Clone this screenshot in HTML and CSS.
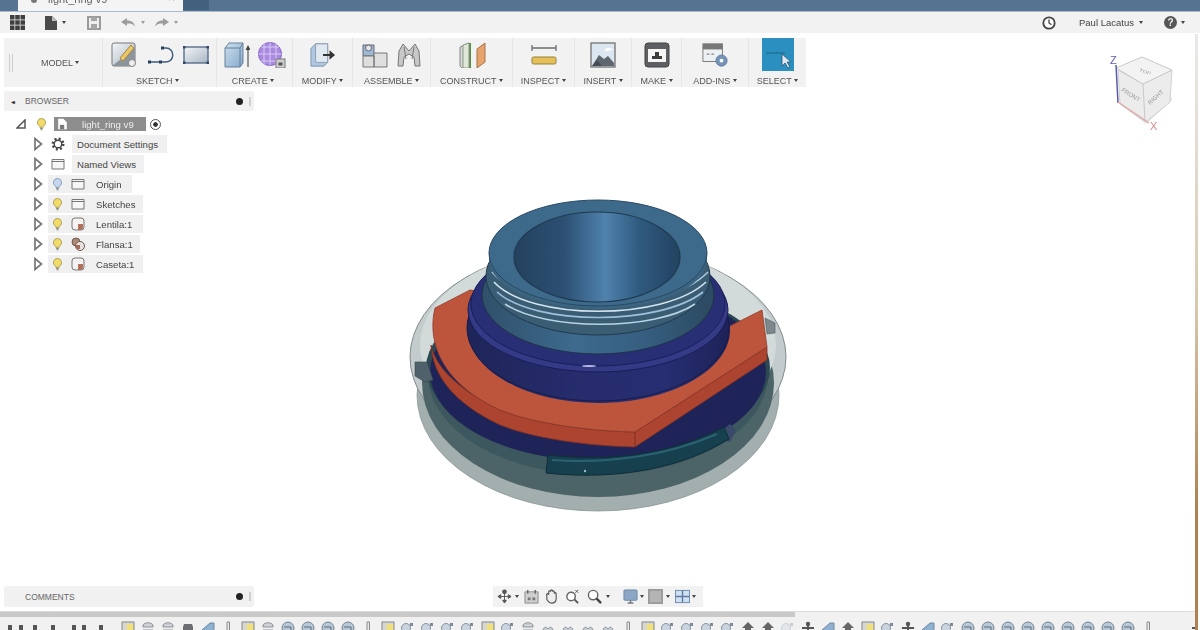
FILE: index.html
```html
<!DOCTYPE html>
<html lang="en">
<head>
<meta charset="utf-8">
<title>light_ring v9</title>
<link rel="stylesheet" href="styles.css">
</head>
<body>
<svg class="defs" aria-hidden="true">
  <defs>
    <linearGradient id="hole" x1="0" x2="1" y1="0" y2="0">
      <stop offset="0" stop-color="#24425f"/><stop offset=".3" stop-color="#2c4f72"/><stop offset=".55" stop-color="#4f82ad"/><stop offset=".75" stop-color="#2f5b80"/><stop offset="1" stop-color="#234260"/>
    </linearGradient>
    <linearGradient id="indigo" x1="0" x2="1" y1="0" y2="0">
      <stop offset="0" stop-color="#1e2558"/><stop offset=".4" stop-color="#262c6c"/><stop offset=".75" stop-color="#272e72"/><stop offset="1" stop-color="#1d2358"/>
    </linearGradient>
    <linearGradient id="steel" x1="0" x2="1" y1="0" y2="0">
      <stop offset="0" stop-color="#30506a"/><stop offset=".4" stop-color="#3d6a8e"/><stop offset=".7" stop-color="#365e80"/><stop offset="1" stop-color="#2c4a60"/>
    </linearGradient>
    <linearGradient id="sheet" x1="0" x2="1" y1="0" y2="1">
      <stop offset="0" stop-color="#f4f6f8"/><stop offset="1" stop-color="#a9b4c2"/>
    </linearGradient>
    <linearGradient id="blue-box" x1="0" x2="1" y1="0" y2="1">
      <stop offset="0" stop-color="#cfe0ee"/><stop offset="1" stop-color="#83a9cb"/>
    </linearGradient>
    <symbol id="bulb" viewBox="0 0 12 14">
      <path d="M6 1a4.400 4.400 0 0 0-2.600 8c.6.5.8 1 .8 1.600h3.600c0-.6.2-1.100.8-1.600A4.400 4.400 0 0 0 6 1z" fill="#f1dc6a" stroke="#a89a55"/>
      <path d="M4.400 12h3.200M5 13.400h2" stroke="#7d7d70"/>
    </symbol>
    <symbol id="bulb-off" viewBox="0 0 12 14">
      <path d="M6 1a4.400 4.400 0 0 0-2.600 8c.6.5.8 1 .8 1.600h3.600c0-.6.2-1.100.8-1.600A4.400 4.400 0 0 0 6 1z" fill="#c5d8ee" stroke="#7d97ba"/>
      <path d="M4.400 12h3.200M5 13.400h2" stroke="#7d7d80"/>
    </symbol>
    <symbol id="twisty" viewBox="0 0 10 14">
      <path d="M2 1.500v11L8.500 7z" fill="#fff" stroke="#777" stroke-width="1.700"/>
    </symbol>
    <symbol id="folder" viewBox="0 0 14 12">
      <path d="M1 1.500h12v9.500H1zM1 3.500h12" fill="#f6f6f6" stroke="#777"/>
    </symbol>
    <symbol id="comp" viewBox="0 0 14 14">
      <rect x="1" y="1" width="12" height="12" rx="3" fill="#f6f4f2" stroke="#777"/>
      <path d="M7 7h5v3a3 3 0 0 1-3 3H7z" fill="#b0705c"/>
    </symbol>
    <symbol id="comp2" viewBox="0 0 14 14">
      <circle cx="5" cy="5" r="4" fill="#b28675" stroke="#6d5a55"/>
      <circle cx="9" cy="9" r="4.500" fill="#e9e3e0" stroke="#6d5a55"/>
      <path d="M5 8h4v4H5z" fill="#a56a58"/>
    </symbol>
    <symbol id="tl-y" viewBox="0 0 14 14"><rect x="1" y="1" width="12" height="12" fill="#d6d6d2" stroke="#888"/><path d="M6 3h6v8H6z" fill="#f1df7a"/></symbol>
    <symbol id="tl-s" viewBox="0 0 14 14"><path d="M2 4c2-3 8-3 10 0v2H2zM2 9h10v3H2z" fill="#cfd3d8" stroke="#8d9298"/></symbol>
    <symbol id="tl-d" viewBox="0 0 14 14"><path d="M3 3h8l1 3v6H2V6z" fill="#6b6f73"/></symbol>
    <symbol id="tl-b" viewBox="0 0 14 14"><path d="M1 9l8-7h4v10H1z" fill="#8fb0cf" stroke="#6f88a3"/></symbol>
    <symbol id="tl-p" viewBox="0 0 14 14"><path d="M6 1h2.500v12H6z" fill="#e8e8e8" stroke="#8a8a8a"/></symbol>
    <symbol id="tl-r" viewBox="0 0 14 14"><circle cx="7" cy="7" r="6" fill="#b7c7d8" stroke="#75838f"/><path d="M3 6h7v5" fill="none" stroke="#5f6c78"/></symbol>
    <symbol id="tl-q" viewBox="0 0 14 14"><circle cx="5" cy="7" r="4.500" fill="#c9d4e0" stroke="#87929e"/><path d="M9 2h3v3H9z" fill="#7b8b9b"/></symbol>
    <symbol id="tl-m" viewBox="0 0 14 14"><path d="M2 9c1-3 3-4 5-1 2-3 4-2 5 1v4H2z" fill="#c6cdd5" stroke="#8a949f"/></symbol>
    <symbol id="tl-u" viewBox="0 0 14 14"><path d="M7 1l6 6h-3v6H4V7H1z" fill="#666"/></symbol>
    <symbol id="tl-a" viewBox="0 0 14 14"><circle cx="7" cy="3" r="2.200" fill="#555"/><path d="M7 3v10M1 7h12" stroke="#555" stroke-width="2"/></symbol>
  </defs>
</svg>

<div class="app">
  <header class="tabs">
    <div class="tab">
      <svg class="tab-doc" viewBox="0 0 8 8"><circle cx="4" cy="4" r="3" fill="#777"/></svg>
      <span class="tab-title">light_ring v9</span>
      <span class="tab-close">×</span>
    </div>
    <div class="tab-new"></div>
  </header>

  <div class="qat">
    <svg class="qat-grid" viewBox="0 0 15 15"><path d="M0 0h4.500v4.500H0zM5.200 0h4.600v4.500H5.200zM10.500 0H15v4.500h-4.500zM0 5.200h4.500v4.600H0zM5.200 5.200h4.600v4.600H5.200zM10.500 5.200H15v4.600h-4.500zM0 10.500h4.500V15H0zM5.200 10.500h4.600V15H5.200zM10.500 10.500H15V15h-4.500z" fill="#3f3f3f"/></svg>
    <svg class="qat-file" viewBox="0 0 12 14"><path d="M0 0h7l5 5v9H0z" fill="#4a4a4a"/><path d="M7 0v5h5" fill="#bbb"/></svg>
    <span class="caret qat-c1"></span>
    <svg class="qat-save" viewBox="0 0 14 14"><path d="M1 1h12v12H1z" fill="#eee" stroke="#9a9a9a" stroke-width="2"/><path d="M4 1h6v4H4zM4 8h6v5H4z" fill="#a5a5a5"/></svg>
    <svg class="qat-undo" viewBox="0 0 14 10"><path d="M0 4l6-4v2.500c4 0 7 1.500 8 6-2-2.500-4-3-8-3V8z" fill="#9c9c9c"/></svg>
    <span class="caret caret-faded qat-c2"></span>
    <svg class="qat-redo" viewBox="0 0 14 10"><path d="M14 4L8 0v2.500c-4 0-7 1.500-8 6 2-2.500 4-3 8-3V8z" fill="#9c9c9c"/></svg>
    <span class="caret caret-faded qat-c3"></span>
    <svg class="qat-clock" viewBox="0 0 14 14"><circle cx="7" cy="7" r="5.700" fill="#fff" stroke="#444" stroke-width="1.800"/><path d="M7 3.500V7l2.500 1.800" fill="none" stroke="#444" stroke-width="1.300"/></svg>
    <span class="qat-user">Paul Lacatus</span>
    <span class="caret qat-c4"></span>
    <span class="qat-help">?</span>
    <span class="caret qat-c5"></span>
  </div>

  <main class="workspace">
    <svg class="viewcube" viewBox="1100 48 75 85">
      <path d="M1122 106l24 18 26-24-2-6-24 24z" fill="#e4e4e4"/>
      <path d="M1118 70l2 34 26 18 24-20 2-32-29 14z" fill="#ececec" stroke="#cfcfcf"/>
      <path d="M1116 68l26-11 30 13-29 14z" fill="#f3f3f3" stroke="#c8c8c8"/>
      <path d="M1143 84l2 37" stroke="#c8c8c8"/>
      <path d="M1116 65l2 38" stroke="#5a5aa8" stroke-width="1.500"/>
      <path d="M1118 102l31 21" stroke="#e3a9a9" stroke-width="1.500"/>
      <text class="vc-axis vc-z" x="1110" y="64">Z</text>
      <text class="vc-axis vc-x" x="1150" y="130">X</text>
      <text class="vc-label" transform="translate(1139 71) rotate(20) scale(1 .7)">TOP</text>
      <text class="vc-label" transform="translate(1121 91) rotate(32)">FRONT</text>
      <text class="vc-label" transform="translate(1150 105) rotate(-42)">RIGHT</text>
    </svg>

    <svg class="model" viewBox="400 190 400 330">
      <!-- translucent outer shell -->
      <ellipse cx="598" cy="395" rx="181" ry="116" fill="#a3aeae" stroke="#8a9596" stroke-width=".8"/>
      <ellipse cx="598" cy="357" rx="188" ry="112" fill="#c3cbcc" stroke="#7f8a8b"/>
      <ellipse cx="598" cy="383" rx="176" ry="114" fill="#4c6367"/>
      <ellipse cx="598" cy="375" rx="170" ry="100" fill="#3c585e"/>
      <ellipse cx="598" cy="345" rx="178" ry="100" fill="#d3dada"/>
      <ellipse cx="598" cy="368" rx="172" ry="84" fill="#2c4851"/>
      <!-- navy base plate -->
      <ellipse cx="598" cy="372" rx="168" ry="89" fill="#1f2458"/>
      <path d="M415 362h12l6 18-8 2-10-6z" fill="#4f626b" stroke="#39474f" stroke-width=".6"/>
      <path d="M765 318l10 5v10l-8 1z" fill="#7d888c" stroke="#4f5a5f" stroke-width=".6"/>
      <path d="M720 432l10-8 6 6-6 12-7-2z" fill="#394a6a"/>
      <!-- teal arc piece -->
      <path d="M548 455c70 8 130-4 176-28l5 12c-45 28-110 42-183 34z" fill="#17404f" stroke="#0f2d39"/>
      <path d="M552 460c55 4 115-4 165-26" fill="none" stroke="#2b6272" stroke-width="2"/>
      <circle cx="585" cy="471" r="1.200" fill="#8fbcc4"/>
      <!-- red part -->
      <path d="M431 345C433 375 452 402 500 425C535 439 590 446 635 447L767 360V347L635 432C590 431 535 424 500 410C455 388 435 365 431 345z" fill="#ad4430" stroke="#7a2e22" stroke-width=".8"/>
      <path d="M435 308C426 345 445 385 500 410C535 424 590 431 635 432L767 347L762 310L728 327L470 290z" fill="#bd543c" stroke="#8e3b2b" stroke-width=".8"/>
      <path d="M635 432v15" stroke="#7a2e22"/>
      <!-- indigo body -->
      <path d="M468 322v8c0 40 58 73 130 73s132-33 132-73v-8z" fill="url(#indigo)"/>
      <ellipse cx="598" cy="328" rx="131" ry="73" fill="url(#indigo)" stroke="#181c4a"/>
      <ellipse cx="598" cy="310" rx="130" ry="62" fill="#343a86" stroke="#1a1e58"/>
      <ellipse cx="598" cy="304" rx="127" ry="62" fill="#282f74" stroke="#1a1e58"/>
      <ellipse cx="589" cy="366" rx="7" ry="1" fill="#b7b9e0"/>
      <!-- steel neck and threads -->
      <ellipse cx="598" cy="295" rx="116" ry="59" fill="url(#steel)" stroke="#1e3348"/>
      <ellipse cx="598" cy="276" rx="112" ry="59" fill="#3a5d74" stroke="#22394c"/>
      <g fill="none" stroke-width="1.600">
        <path d="M505 304C545 331 655 331 695 304" stroke="#b9d3e6"/>
        <path d="M497 292C535 326 660 326 703 292" stroke="#9fc0da"/>
        <path d="M494 282C530 321 665 321 706 282" stroke="#d2e4f1"/>
        <path d="M492 272C530 316 665 316 708 272" stroke="#a9c8de"/>
      </g>
      <!-- top collar -->
      <path d="M489 253v6c0 28 49 50 109 50s109-22 109-50v-6z" fill="#3b6480"/>
      <ellipse cx="598" cy="253" rx="109" ry="53" fill="#3d6a8a" stroke="#294a63"/>
      <ellipse cx="597" cy="257" rx="83" ry="45" fill="url(#hole)" stroke="#1f3a50" stroke-width="1.200"/>
    </svg>

    <nav class="toolbar">
      <section class="group g-model">
        <span class="grip"></span>
        <span class="model-label">MODEL <span class="tri"></span></span>
      </section>
      <section class="group g-sketch">
        <div class="icons">
          <svg class="ic" viewBox="0 0 26 26"><rect x="1" y="1" width="23" height="23" rx="2" fill="url(#sheet)" stroke="#777"/><path d="M1 24L24 6v16l-2 2z" fill="#8c949c"/><path d="M9 16L20 3l3 3-11 13z" fill="#e9c86a" stroke="#a7853a"/><circle cx="21" cy="21" r="3.500" fill="#eee" stroke="#888"/></svg>
          <svg class="ic ic-line" viewBox="0 0 28 22"><path d="M2 18h17c9 0 9-14 0-14h-5" fill="none" stroke="#3e5a7c" stroke-width="1.400"/><g fill="#27405f"><rect x="1" y="16.500" width="3" height="3"/><rect x="12" y="16.500" width="3" height="3"/><rect x="14" y="2.500" width="3" height="3"/></g></svg>
          <svg class="ic ic-rect" viewBox="0 0 26 18"><rect x="1" y="1" width="24" height="16" fill="url(#sheet)" stroke="#4d6684" stroke-width="1.300"/><g fill="#2e4664"><rect y="0" width="2.500" height="2.500"/><rect x="23.500" y="0" width="2.500" height="2.500"/><rect y="15.500" width="2.500" height="2.500"/><rect x="23.500" y="15.500" width="2.500" height="2.500"/></g></svg>
        </div>
        <span class="label l-sketch">SKETCH <span class="tri"></span></span>
      </section>
      <section class="group g-create">
        <div class="icons">
          <svg class="ic" viewBox="0 0 26 26"><path d="M1 6l4-5h14v20l-3 4H1z" fill="url(#blue-box)" stroke="#66809c"/><path d="M1 6h15v19M16 6l3-5" fill="none" stroke="#66809c"/><path d="M24 25V7" stroke="#555" stroke-width="1.200"/><path d="M24 3l2.500 5h-5z" fill="#444"/></svg>
          <svg class="ic ic-wide" viewBox="0 0 28 26"><circle cx="12" cy="12" r="11.500" fill="#a98ae0" stroke="#8569c2"/><path d="M.5 12h23M12 .5v23M3 5h18M3 19h18M6 1.500v21M18 1.500v21" stroke="#d9cbf5" fill="none"/><rect x="18" y="17" width="9" height="9" fill="#cfcfcf" stroke="#777"/><rect x="20.500" y="20.500" width="4" height="3" fill="#555"/></svg>
        </div>
        <span class="label l-create">CREATE <span class="tri"></span></span>
      </section>
      <section class="group g-modify">
        <div class="icons">
          <svg class="ic" viewBox="0 0 28 26"><path d="M1 6l5-5h13v20l-4 4H1z" fill="#aec8e2" stroke="#7d92a8"/><path d="M6 1h13v20H6z" fill="#e0e8f0" stroke="#8d9db0"/><path d="M14 12h7V8l6 5-6 5v-4h-7z" fill="#333"/></svg>
        </div>
        <span class="label">MODIFY <span class="tri"></span></span>
      </section>
      <section class="group g-assemble">
        <div class="icons">
          <svg class="ic" viewBox="0 0 26 26"><path d="M1 3h11v11H1z" fill="#9db9d3" stroke="#667"/><path d="M1 14h11v11H1zM12 11h13v14H12z" fill="#dedede" stroke="#777"/><circle cx="6.500" cy="6" r="3" fill="#e6e6e6" stroke="#667"/></svg>
          <svg class="ic" viewBox="0 0 26 26"><path d="M2 24l1-15 4-7 6 7 6-7 4 7 1 15h-5l-1-9-5-3-5 3-1 9z" fill="#c8c8c8" stroke="#777"/><path d="M8 5l2 12M18 5l-2 12" stroke="#777" fill="none"/></svg>
        </div>
        <span class="label">ASSEMBLE <span class="tri"></span></span>
      </section>
      <section class="group g-construct">
        <div class="icons">
          <svg class="ic ic-wide" viewBox="0 0 28 26"><path d="M2 5l9-4v25H4l-2-2z" fill="#d5d5d5" stroke="#8b8b8b"/><path d="M11 1h2v25h-2z" fill="#5b8a44"/><path d="M5 3l6-2v25H5z" fill="#dfe8d8" stroke="#8a9a82"/><path d="M19 7l8-6v19l-8 6z" fill="#e6a36c" stroke="#a5734a"/></svg>
        </div>
        <span class="label">CONSTRUCT <span class="tri"></span></span>
      </section>
      <section class="group g-inspect">
        <div class="icons">
          <svg class="ic" viewBox="0 0 26 22"><path d="M1 4h24M1 1v6M25 1v6" stroke="#6d6d6d" stroke-width="1.300" fill="none"/><rect x="1" y="13" width="24" height="7" rx="1.500" fill="#e5bf5a" stroke="#96813c"/></svg>
        </div>
        <span class="label">INSPECT <span class="tri"></span></span>
      </section>
      <section class="group g-insert">
        <div class="icons">
          <svg class="ic" viewBox="0 0 26 26"><rect x="1" y="1" width="24" height="24" fill="#dbe6f0" stroke="#7a7a7a" stroke-width="1.400"/><path d="M2 24l7-11 5 4 4-3 6 7v3z" fill="#5e6670"/><path d="M2 24l5-6 5 6z" fill="#474c54"/><path d="M15 7c3-2 7-1 8 1l-8 1z" fill="#fff"/></svg>
        </div>
        <span class="label">INSERT <span class="tri"></span></span>
      </section>
      <section class="group g-make">
        <div class="icons">
          <svg class="ic" viewBox="0 0 26 26"><rect x="1" y="1" width="24" height="24" rx="3" fill="#5d5f63" stroke="#444"/><rect x="4" y="7" width="18" height="13" fill="#f5f5f5"/><path d="M8 17h10v-3h-3v-4h-4v4H8z" fill="#3d3d3d"/></svg>
        </div>
        <span class="label">MAKE <span class="tri"></span></span>
      </section>
      <section class="group g-addins">
        <div class="icons">
          <svg class="ic" viewBox="0 0 28 26"><rect x="1" y="1" width="21" height="19" fill="#eef1f4" stroke="#777"/><path d="M1 1h21v6H1z" fill="#777"/><path d="M5 12h3M10 12h3" stroke="#888" stroke-width="1.400"/><circle cx="21" cy="19" r="6" fill="#7694b8" stroke="#5e7a9b"/><circle cx="21" cy="19" r="2" fill="#fff"/></svg>
        </div>
        <span class="label">ADD-INS <span class="tri"></span></span>
      </section>
      <section class="group g-select">
        <div class="select-box">
          <svg class="ic-select" viewBox="0 0 32 33"><rect width="32" height="33" fill="#2b8fc0"/><path d="M4 15h19" stroke="#1f7597" stroke-width="1.500"/><path d="M20 16l0 12 3-3 3 5 2-1-3-5h4z" fill="#dfe7ee" stroke="#1d4a66" stroke-width=".7"/></svg>
        </div>
        <span class="label l-select">SELECT <span class="tri"></span></span>
      </section>
    </nav>

    <section class="panel browser">
      <span class="dbl-arrow">◂◂</span>
      <span class="panel-title">BROWSER</span>
      <span class="pin"></span>
      <span class="panel-grip"></span>
    </section>

    <ul class="tree">
      <li class="row row-root">
        <svg class="root-tri" viewBox="0 0 10 10"><path d="M1 9L9 1v8z" fill="#fff" stroke="#555" stroke-width="1.500"/></svg>
        <svg class="bulb-root"><use href="#bulb"/></svg>
        <span class="root-chip">
          <svg class="root-doc" viewBox="0 0 12 14"><path d="M1 1h6l4 4v8H1z" fill="#fff"/><path d="M3 8h5v5H3z" fill="#7a7a7a"/></svg>
          <span class="root-name">light_ring v9</span>
        </span>
        <span class="root-radio"></span>
      </li>
      <li class="row">
        <svg class="twisty"><use href="#twisty"/></svg>
        <svg class="plain-ic" viewBox="0 0 14 14"><circle cx="7" cy="7" r="5.300" fill="none" stroke="#444" stroke-width="2.400" stroke-dasharray="2 2.160"/><circle cx="7" cy="7" r="3.800" fill="none" stroke="#444" stroke-width="1.400"/></svg>
        <span class="chip chip-plain w-doc">Document Settings</span>
      </li>
      <li class="row">
        <svg class="twisty"><use href="#twisty"/></svg>
        <svg class="plain-ic"><use href="#folder"/></svg>
        <span class="chip chip-plain w-views">Named Views</span>
      </li>
      <li class="row">
        <svg class="twisty"><use href="#twisty"/></svg>
        <span class="chip w-origin"><svg class="bulb"><use href="#bulb-off"/></svg><svg class="node-ic"><use href="#folder"/></svg><span class="node-name">Origin</span></span>
      </li>
      <li class="row">
        <svg class="twisty"><use href="#twisty"/></svg>
        <span class="chip w-full"><svg class="bulb"><use href="#bulb"/></svg><svg class="node-ic"><use href="#folder"/></svg><span class="node-name">Sketches</span></span>
      </li>
      <li class="row">
        <svg class="twisty"><use href="#twisty"/></svg>
        <span class="chip w-full"><svg class="bulb"><use href="#bulb"/></svg><svg class="node-ic"><use href="#comp"/></svg><span class="node-name">Lentila:1</span></span>
      </li>
      <li class="row">
        <svg class="twisty"><use href="#twisty"/></svg>
        <span class="chip w-flansa"><svg class="bulb"><use href="#bulb"/></svg><svg class="node-ic"><use href="#comp2"/></svg><span class="node-name">Flansa:1</span></span>
      </li>
      <li class="row">
        <svg class="twisty"><use href="#twisty"/></svg>
        <span class="chip w-full"><svg class="bulb"><use href="#bulb"/></svg><svg class="node-ic"><use href="#comp"/></svg><span class="node-name">Caseta:1</span></span>
      </li>
    </ul>

    <section class="panel comments">
      <span class="panel-title">COMMENTS</span>
      <span class="pin"></span>
      <span class="panel-grip"></span>
    </section>

    <div class="navbar">
      <svg class="nb nb-orbit" viewBox="0 0 16 16"><circle cx="8" cy="3" r="2.500" fill="#555"/><path d="M8 3v11M1 8h14M1 8l3-2v4zM15 8l-3-2v4zM8 15l-2-3h4z" stroke="#555" fill="#555"/></svg>
      <span class="caret nb-c1"></span>
      <svg class="nb nb-cal" viewBox="0 0 16 16"><path d="M1 3h14v12H1z" fill="#cfcfcf" stroke="#8b8b8b"/><path d="M4 1v4M12 1v4" stroke="#666" stroke-width="1.500"/><path d="M4 9h3v3H4zM9 9h3v3H9z" fill="#777"/></svg>
      <svg class="nb nb-hand" viewBox="0 0 16 16"><path d="M3 7c-1-2 1-3 2-1V3c0-1.500 2-1.500 2 0V2c0-1.500 2-1.500 2 0v1c0-1.500 2-1.500 2 0v2c0-1.500 2-1.500 2 0v5c0 3-2 5-5 5-3 0-4-2-5-4z" fill="#eee" stroke="#555" stroke-width="1.200"/></svg>
      <svg class="nb nb-zoom" viewBox="0 0 16 16"><circle cx="6.500" cy="8" r="4.500" fill="#fff" stroke="#666" stroke-width="1.500"/><path d="M10 11l4 4" stroke="#555" stroke-width="2"/><path d="M11 1l3 3M14 1l-3 3" stroke="#555"/></svg>
      <svg class="nb nb-mag" viewBox="0 0 16 16"><circle cx="6.500" cy="6.500" r="5" fill="#fff" stroke="#666" stroke-width="1.500"/><path d="M10 10l5 5" stroke="#444" stroke-width="2.500"/></svg>
      <span class="caret nb-c2"></span>
      <svg class="nb nb-display" viewBox="0 0 16 16"><rect x="1" y="1" width="14" height="11" rx="1" fill="#8ca7c6" stroke="#6c87a6"/><path d="M5 15h6M8 12v3" stroke="#777" stroke-width="1.500"/></svg>
      <span class="caret nb-c3"></span>
      <svg class="nb nb-square" viewBox="0 0 16 16"><rect width="16" height="16" fill="#9b9b9b"/><rect x="2" y="2" width="12" height="12" fill="#b4b4b4"/></svg>
      <span class="caret nb-c4"></span>
      <svg class="nb nb-grid" viewBox="0 0 16 16"><rect x=".5" y="1.500" width="15" height="13" fill="#cfe0f2" stroke="#6e8cb0"/><path d="M8 1.500v13M.5 8h15" stroke="#5d7ca3" stroke-width="1.500"/></svg>
      <span class="caret nb-c5"></span>
    </div>
  </main>

  <footer class="timeline">
    <div class="scrollbar"></div>
    <div class="tl-row">
      <div class="playback">
        <span class="pb pb1"></span><span class="pb pb2"></span><span class="pb pb3"></span><span class="pb pb4"></span><span class="pb pb5"></span><span class="pb pb6"></span><span class="pb pb7"></span>
      </div>
      <svg class="tl"><use href="#tl-y"/></svg><svg class="tl"><use href="#tl-s"/></svg><svg class="tl"><use href="#tl-s"/></svg><svg class="tl"><use href="#tl-d"/></svg><svg class="tl"><use href="#tl-b"/></svg><svg class="tl"><use href="#tl-p"/></svg>
      <svg class="tl"><use href="#tl-y"/></svg><svg class="tl"><use href="#tl-s"/></svg><svg class="tl"><use href="#tl-r"/></svg><svg class="tl"><use href="#tl-r"/></svg><svg class="tl"><use href="#tl-r"/></svg><svg class="tl"><use href="#tl-r"/></svg><svg class="tl"><use href="#tl-p"/></svg>
      <svg class="tl"><use href="#tl-y"/></svg><svg class="tl"><use href="#tl-q"/></svg><svg class="tl"><use href="#tl-q"/></svg><svg class="tl"><use href="#tl-q"/></svg><svg class="tl"><use href="#tl-q"/></svg><svg class="tl"><use href="#tl-y"/></svg><svg class="tl"><use href="#tl-q"/></svg><svg class="tl"><use href="#tl-s"/></svg>
      <svg class="tl"><use href="#tl-m"/></svg><svg class="tl"><use href="#tl-m"/></svg><svg class="tl"><use href="#tl-m"/></svg><svg class="tl"><use href="#tl-m"/></svg><svg class="tl"><use href="#tl-p"/></svg>
      <svg class="tl"><use href="#tl-y"/></svg><svg class="tl"><use href="#tl-q"/></svg><svg class="tl"><use href="#tl-q"/></svg><svg class="tl"><use href="#tl-q"/></svg><svg class="tl"><use href="#tl-q"/></svg><svg class="tl"><use href="#tl-u"/></svg><svg class="tl"><use href="#tl-u"/></svg><svg class="tl tl-faded"><use href="#tl-q"/></svg>
      <svg class="tl"><use href="#tl-a"/></svg><svg class="tl"><use href="#tl-b"/></svg><svg class="tl"><use href="#tl-u"/></svg><svg class="tl"><use href="#tl-y"/></svg><svg class="tl"><use href="#tl-q"/></svg><svg class="tl"><use href="#tl-a"/></svg><svg class="tl"><use href="#tl-b"/></svg><svg class="tl"><use href="#tl-q"/></svg>
      <svg class="tl"><use href="#tl-r"/></svg><svg class="tl"><use href="#tl-r"/></svg><svg class="tl"><use href="#tl-r"/></svg><svg class="tl"><use href="#tl-r"/></svg><svg class="tl"><use href="#tl-r"/></svg><svg class="tl"><use href="#tl-r"/></svg><svg class="tl"><use href="#tl-r"/></svg><svg class="tl"><use href="#tl-r"/></svg><svg class="tl"><use href="#tl-r"/></svg>
      <svg class="tl"><use href="#tl-p"/></svg>
      <svg class="tl tl-last"><use href="#tl-a"/></svg>
    </div>
  </footer>
  <div class="edge"></div>
</div>
</body>
</html>
```

FILE: styles.css
```css
* { box-sizing: border-box; }
html, body { margin: 0; padding: 0; background: #fff; }
body { width: 1200px; height: 630px; overflow: hidden; font-family: "Liberation Sans", Arial, sans-serif; color: #555; }
.defs { position: absolute; width: 0; height: 0; }
.app { position: relative; width: 1200px; height: 630px; display: flex; flex-direction: column; filter: blur(.7px); overflow: hidden; }
svg { display: block; flex: none; }

/* tab strip */
.tabs { flex: none; height: 12px; display: flex; padding-left: 18px; background: #567391; border-bottom: 1.500px solid #a9bccc; overflow: hidden; }
.tab { width: 165px; height: 12px; background: #f4f4f4; display: flex; align-items: flex-start; padding-left: 12px; position: relative; }
.tab-doc { width: 8px; height: 8px; margin-top: -4px; }
.tab-title { margin: -7px 0 0 10px; font-size: 11px; color: #666; line-height: 12px; }
.tab-close { margin: -8px 0 0 auto; padding-right: 8px; font-size: 12px; line-height: 12px; color: #777; }
.tab-new { width: 26px; height: 10px; background: #42617f; }

/* quick access */
.qat { flex: none; height: 21px; background: #f2f2f2; position: relative; display: flex; align-items: center; padding-left: 10px; }
.qat-grid { width: 15px; height: 15px; }
.qat-file { width: 12px; height: 14px; margin-left: 20px; }
.caret { width: 0; height: 0; flex: none; border-left: 2.500px solid transparent; border-right: 2.500px solid transparent; border-top: 3px solid #444; }
.caret-faded { border-top-color: #999; }
.qat-c1 { margin-left: 5px; }
.qat-save { width: 14px; height: 14px; margin-left: 21px; }
.qat-undo { width: 14px; height: 10px; margin-left: 20px; }
.qat-c2 { margin-left: 6px; }
.qat-redo { width: 14px; height: 10px; margin-left: 10px; }
.qat-c3 { margin-left: 5px; }
.qat-clock { width: 14px; height: 14px; margin-left: 864px; }
.qat-user { margin-left: 23px; font-size: 9.500px; color: #444; white-space: nowrap; }
.qat-c4 { margin-left: 5px; }
.qat-help { width: 13px; height: 13px; margin-left: 21px; border-radius: 50%; background: #555; color: #eee; font: bold 10px/13px "Liberation Sans", sans-serif; text-align: center; }
.qat-c5 { margin-left: 4px; }

/* workspace */
.workspace { flex: 1; position: relative; display: flex; flex-direction: column; align-items: flex-start; padding: 5px 0 4px 4px; min-height: 0; }
.viewcube { position: absolute; left: 1100px; top: 15px; width: 75px; height: 85px; }
.vc-axis { font: 11px "Liberation Sans", sans-serif; }
.vc-z { fill: #5f5fb8; }
.vc-x { fill: #d88a8a; }
.vc-label { font: 6px "Liberation Sans", sans-serif; fill: #999; }
.model { position: absolute; left: 400px; top: 157px; width: 400px; height: 330px; }

/* ribbon */
.toolbar { position: relative; width: 802px; height: 49px; display: flex; background: #f2f2f2; flex: none; }
.group { display: flex; flex-direction: column; align-items: center; height: 49px; border-right: 1px solid #e6e6e6; position: relative; }
.group:last-child { border-right: 0; }
.icons { height: 33px; display: flex; align-items: center; gap: 8px; padding-top: 1px; }
.ic { width: 26px; height: 26px; }
.ic-wide { width: 28px; }
.ic-line { width: 28px; height: 22px; margin-left: 2px; }
.ic-rect { height: 18px; }
.label { font-size: 9px; line-height: 10px; margin-top: 5px; white-space: nowrap; color: #555; }
.tri { display: inline-block; width: 0; height: 0; border-left: 2.500px solid transparent; border-right: 2.500px solid transparent; border-top: 3px solid #444; vertical-align: 2px; }
.g-model { width: 99px; flex-direction: row; }
.grip { width: 4px; height: 18px; margin-left: 5px; border-left: 1px solid #ccc; border-right: 1px solid #ccc; }
.model-label { font-size: 9px; margin-left: 28px; white-space: nowrap; color: #555; }
.g-sketch { width: 114px; }
.l-sketch { margin-right: 4px; }
.l-create { margin-right: 3px; }
.g-create { width: 76px; }
.g-modify { width: 60px; }
.g-assemble { width: 78px; }
.g-construct { width: 82px; }
.g-inspect { width: 62px; }
.g-insert { width: 57px; }
.g-make { width: 50px; }
.g-addins { width: 67px; }
.g-select { width: 57px; }
.select-box { height: 33px; }
.ic-select { width: 32px; height: 33px; }
.g-select .label { margin-top: 5px; }

/* panels */
.panel { position: relative; width: 250px; height: 21px; flex: none; display: flex; align-items: center; background: #f1f1f1; border-radius: 2px; font-size: 8.500px; color: #666; }
.browser { margin-top: 4px; padding-left: 7px; height: 20px; }
.comments { margin-top: auto; padding-left: 21px; }
.dbl-arrow { font-size: 6px; letter-spacing: -2px; color: #333; width: 14px; }
.panel-title { white-space: nowrap; }
.pin { width: 7px; height: 7px; margin-left: auto; border-radius: 50%; background: #222; }
.panel-grip { width: 2px; height: 9px; margin: 0 3px 0 6px; background: #cfcfcf; }

/* tree */
.tree { list-style: none; margin: 3px 0 0; padding: 0 0 0 29px; font-size: 9.600px; color: #444; }
.row { height: 20px; display: flex; align-items: center; }
.twisty { width: 10px; height: 14px; margin-right: 5px; }
.plain-ic { width: 14px; height: 14px; margin: 0 7px 0 3px; }
.chip { height: 18px; display: flex; align-items: center; background: #f0f0f0; white-space: nowrap; }
.chip-plain { padding-left: 5px; }
.bulb { width: 11px; height: 14px; margin-left: 4px; }
.node-ic { width: 14px; height: 14px; margin-left: 8px; }
.node-name { margin-left: 11px; }
.w-doc { width: 95px; }
.w-views { width: 72px; }
.w-origin { width: 84px; }
.w-full { width: 95px; }
.w-flansa { width: 92px; }
.row-root { margin-left: -17px; }
.root-tri { width: 10px; height: 10px; }
.bulb-root { width: 11px; height: 14px; margin-left: 10px; }
.root-chip { width: 92px; height: 14px; margin-left: 7px; background: #8d8d8d; display: flex; align-items: center; padding-left: 3px; }
.root-doc { width: 11px; height: 12px; }
.root-name { margin-left: 14px; color: #eee; white-space: nowrap; }
.root-radio { width: 11px; height: 11px; margin-left: 4px; border-radius: 50%; border: 1px solid #555; background: radial-gradient(circle, #333 0 2px, #fff 2.500px); }

/* navigation bar */
.navbar { position: absolute; left: 493px; top: 553px; width: 210px; height: 21px; display: flex; align-items: center; background: #f2f2f2; padding-left: 4px; }
.nb { width: 15px; height: 15px; }
.nb-c1 { margin: 0 0 0 3px; }
.nb-cal { margin-left: 5px; }
.nb-hand { margin-left: 5px; }
.nb-zoom { margin-left: 6px; }
.nb-mag { margin-left: 7px; }
.nb-c2 { margin-left: 4px; }
.nb-display { margin-left: 13px; }
.nb-c3 { margin-left: 2px; }
.nb-square { margin-left: 4px; }
.nb-c4 { margin-left: 3px; }
.nb-grid { margin-left: 5px; }
.nb-c5 { margin-left: 2px; }

/* timeline */
.timeline { flex: none; height: 19px; width: 1195px; background: #f1f1f1; overflow: hidden; border-top: 1px solid #dcdcdc; }
.scrollbar { width: 795px; height: 5px; background: #c9c9c9; }
.tl-row { display: flex; align-items: flex-start; padding-top: 4px; height: 20px; }
.playback { width: 118px; height: 20px; flex: none; position: relative; }
.pb { position: absolute; top: 4px; width: 4px; height: 5px; background: #555; }
.pb1 { left: 8px; }
.pb2 { left: 19px; }
.pb3 { left: 33px; }
.pb4 { left: 51px; }
.pb5 { left: 72px; }
.pb6 { left: 82px; }
.pb7 { left: 99px; }
.tl { width: 14px; height: 14px; margin: 0 3px; }
.tl-faded { opacity: .35; }
.tl-last { margin-left: 33px; }
.edge { position: absolute; left: 1195px; top: 34px; width: 3px; height: 596px; background: linear-gradient(#e9e9e9, #d8c9b0 45%, #ad8250 80%); }
```
